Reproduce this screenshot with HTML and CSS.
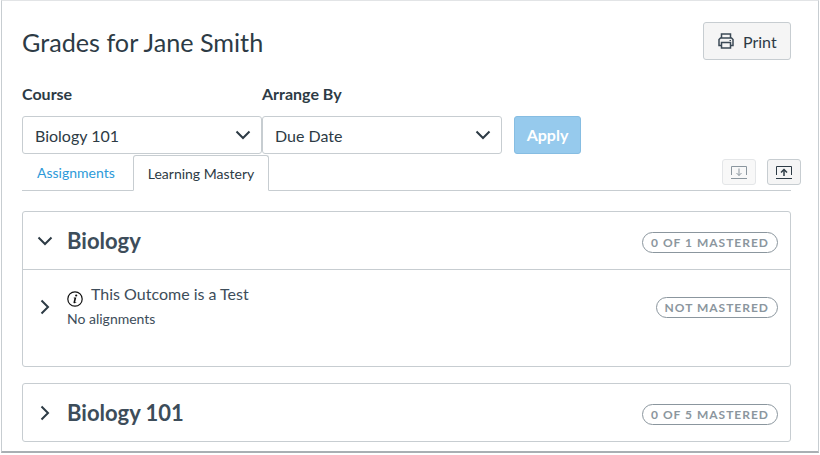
FILE: index.html
```html
<!DOCTYPE html>
<html lang="en">

<head>
  <meta charset="UTF-8" />
  <title>Grades for Jane Smith</title>
  <link rel="stylesheet" href="styles.css">
</head>

<body>
  <div class="window">
    <div class="head">
      <h1 class="title">Grades for Jane Smith</h1>
      <button class="btn print">
        <svg class="print-icon" width="16" height="16" viewBox="0 0 16 16" fill="none" stroke="#3b4956" stroke-width="1.5">
          <path d="M3.500 5V1h9v4" />
          <path d="M3.500 12.500H1V6.500l1.500-1.500h11L15 6.500v6h-2.500" />
          <path d="M3.500 9.500h9V15h-9z" />
          <path d="M11.500 7.500h1.500" stroke-width="1" />
        </svg>
        <span>Print</span>
      </button>
    </div>

    <div class="filters">
      <div class="field">
        <label>Course</label>
        <div class="select">
          <span>Biology 101</span>
          <svg width="16" height="10" viewBox="0 0 16 10" fill="none" stroke="#2d3b45" stroke-width="2">
            <path d="M1.500 1.500 8 8l6.500-6.500" />
          </svg>
        </div>
      </div>
      <div class="field">
        <label>Arrange By</label>
        <div class="select">
          <span>Due Date</span>
          <svg width="16" height="10" viewBox="0 0 16 10" fill="none" stroke="#2d3b45" stroke-width="2">
            <path d="M1.500 1.500 8 8l6.500-6.500" />
          </svg>
        </div>
      </div>
      <button class="apply">Apply</button>
    </div>

    <div class="tabs">
      <a class="tab">Assignments</a>
      <a class="tab active">Learning Mastery</a>
      <div class="tools">
        <button class="tool off">
          <svg width="18" height="14" viewBox="0 0 18 14" fill="none" stroke="#8b969e">
            <path d="M1.500 10V1.500h15V10M1 13.500h16" />
            <path d="M9 3.500v7M6.500 8 9 10.500 11.500 8" />
          </svg>
        </button>
        <button class="tool">
          <svg width="18" height="14" viewBox="0 0 18 14" fill="none" stroke="#2d3b45">
            <path d="M1.500 10V1.500h15V10M1 13.500h16" />
            <path d="M9 5v6" stroke-width="1.500" />
            <path d="M6 7.500 9 4.500l3 3" stroke-width="1.500" />
          </svg>
        </button>
      </div>
    </div>

    <div class="group">
      <div class="group-head">
        <svg class="caret" width="16" height="10" viewBox="0 0 16 10" fill="none" stroke="#2d3b45" stroke-width="2">
          <path d="M1.500 1.500 8 8l6.500-6.500" />
        </svg>
        <h2>Biology</h2>
        <span class="pill">0 OF 1 MASTERED</span>
      </div>
      <div class="outcome">
        <svg class="caret-small" width="10" height="16" viewBox="0 0 10 16" fill="none" stroke="#2d3b45" stroke-width="2">
          <path d="M1.500 1.500 8 8l-6.500 6.500" />
        </svg>
        <div class="outcome-text">
          <div class="outcome-name">
            <svg class="info" width="16" height="16" viewBox="0 0 16 16">
              <circle cx="8" cy="8" r="7.200" fill="none" stroke="#111" stroke-width="1.200" />
              <path d="M6.800 6.400h2.500L8.200 11c-.1.400.3.500 1.100-.1v.7c-1.500 1.100-3.100.9-2.800-.4l.9-3.900h-.7z" fill="#111" />
              <circle cx="9.200" cy="4.500" r="1.100" fill="#111" />
            </svg>
            <span>This Outcome is a Test</span>
          </div>
          <div class="outcome-sub">No alignments</div>
        </div>
        <span class="pill">NOT MASTERED</span>
      </div>
    </div>

    <div class="group">
      <div class="group-head">
        <svg class="caret side" width="10" height="16" viewBox="0 0 10 16" fill="none" stroke="#2d3b45" stroke-width="2">
          <path d="M1.500 1.500 8 8l-6.500 6.500" />
        </svg>
        <h2>Biology 101</h2>
        <span class="pill">0 OF 5 MASTERED</span>
      </div>
    </div>
  </div>
</body>

</html>
```

FILE: styles.css
```css
body {
  margin: 0;
  padding: 0;
  background: #fff;
  font-family: Lato, "Open Sans", sans-serif;
  color: #2d3b45;
}

button {
  font-family: inherit;
  cursor: pointer;
}

.window {
  box-sizing: border-box;
  width: 818px;
  height: 453px;
  margin-left: 1px;
  padding: 21px 27px 0 20px;
  border: 1px solid #c7cdd1;
  border-top-color: #e2e4e6;
  border-bottom: 2px solid #a9afb3;
  overflow: hidden;
}

.head {
  display: flex;
  justify-content: space-between;
  height: 38px;
}

.title {
  margin: 0;
  font-size: 25.2px;
  font-weight: 400;
  line-height: 40px;
  color: #2d3b45;
}

.btn {
  display: flex;
  align-items: center;
  gap: 9px;
  width: 88px;
  height: 38px;
  padding: 0 0 0 14px;
  background: #f5f5f5;
  border: 1px solid #c7cdd1;
  border-radius: 3px;
  font-size: 16px;
  color: #2d3b45;
}

.filters {
  display: flex;
  align-items: flex-end;
  margin-top: 23px;
}

.field {
  display: flex;
  flex-direction: column;
  width: 240px;
}

.field label {
  font-size: 16px;
  font-weight: 700;
  line-height: 22px;
  margin-bottom: 11px;
}

.select {
  box-sizing: border-box;
  display: flex;
  align-items: center;
  justify-content: space-between;
  height: 38px;
  padding: 0 10px 0 12px;
  background: #fff;
  border: 1px solid #c7cdd1;
  border-radius: 3px;
  font-size: 16px;
}

.apply {
  width: 67px;
  height: 38px;
  margin-left: 12px;
  padding: 0 0 2px;
  background: #96caed;
  border: 1px solid #86bde2;
  border-radius: 3px;
  color: #fff;
  font-size: 16px;
  font-weight: 700;
}

.tabs {
  display: flex;
  align-items: flex-end;
  height: 35px;
  margin-top: 1px;
  border-bottom: 1px solid #c7cdd1;
}

.tab {
  box-sizing: border-box;
  height: 36px;
  margin-bottom: -1px;
  padding: 0 18px 0 15px;
  font-size: 14px;
  line-height: 36px;
  color: #2d9ad9;
  white-space: nowrap;
}

.tab.active {
  width: 136px;
  padding: 0 0 0 14px;
  background: #fff;
  border: 1px solid #c7cdd1;
  border-bottom-color: #fff;
  border-radius: 3px 3px 0 0;
  color: #2d3b45;
}

.tools {
  display: flex;
  gap: 11px;
  margin-left: auto;
  margin-right: -10px;
  align-self: flex-start;
  padding-top: 4px;
}

.tool {
  display: flex;
  align-items: center;
  justify-content: center;
  box-sizing: border-box;
  width: 34px;
  height: 26px;
  padding: 0;
  background: #f5f5f5;
  border: 1px solid #c7cdd1;
  border-radius: 3px;
}

.tool.off {
  border-color: #e4e6e8;
  background: #f8f8f8;
}

.group {
  box-sizing: border-box;
  margin-top: 20px;
  background: #fff;
  border: 1px solid #c7cdd1;
  border-radius: 3px;
}

.group+.group {
  margin-top: 16px;
}

.group-head {
  box-sizing: border-box;
  display: flex;
  align-items: center;
  height: 57px;
  padding: 0 12px 0 14px;
}

.group-head h2 {
  margin: 0 0 0 14px;
  font-size: 22px;
  font-weight: 700;
  line-height: 28px;
  color: #3d4d5a;
}

.group-head .pill {
  margin-top: 3px;
}

.caret.side {
  margin: 0 3px;
}

.pill {
  box-sizing: border-box;
  margin-left: auto;
  height: 21px;
  padding: 0 8px;
  border: 1px solid #8b969e;
  border-radius: 11px;
  font-size: 12px;
  font-weight: 700;
  letter-spacing: 1px;
  line-height: 19px;
  color: #8b969e;
  white-space: nowrap;
}

.outcome {
  display: flex;
  align-items: flex-start;
  height: 96px;
  padding: 0 12px 0 17px;
  border-top: 1px solid #c7cdd1;
}

.caret-small {
  margin-top: 29px;
}

.outcome-text {
  margin-left: 17px;
  padding-top: 14px;
}

.outcome-name {
  display: flex;
  align-items: flex-start;
  gap: 8px;
  font-size: 16px;
  line-height: 20px;
  color: #3d4d5a;
}

.info {
  margin: 7px 0 -3px;
}

.outcome-sub {
  margin-top: 6px;
  font-size: 14px;
  line-height: 18px;
  color: #3d4d5a;
}

.outcome .pill {
  margin-top: 27px;
}
```
